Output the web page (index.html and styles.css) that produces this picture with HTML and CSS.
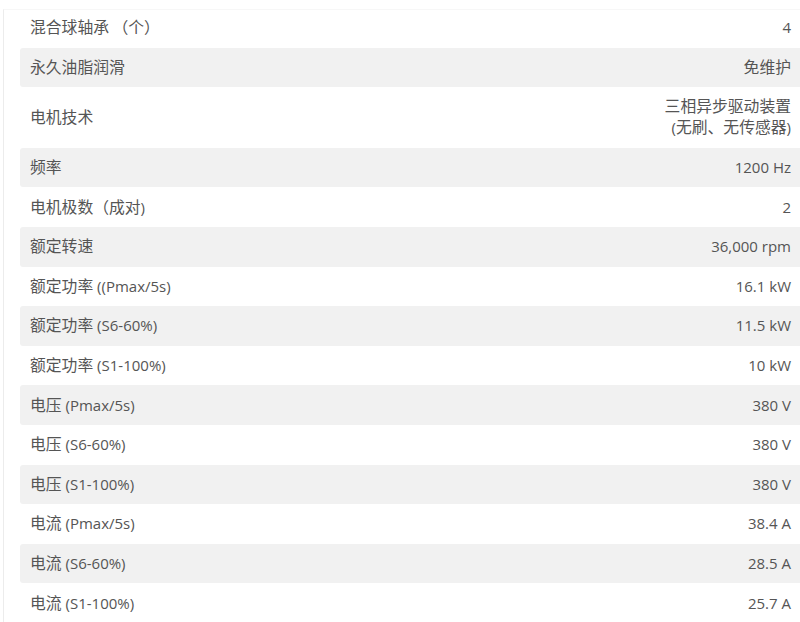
FILE: index.html
```html
<!DOCTYPE html>
<html lang="zh-CN">
<head>
<meta charset="utf-8">
<link rel="stylesheet" href="styles.css">
</head>
<body>
<div class="frame">
  <div class="specs">
    <div class="row"><span class="k"><span class="cn">混合球轴承 （个）</span></span><span class="v">4</span></div>
    <div class="row alt"><span class="k"><span class="cn">永久油脂润滑</span></span><span class="v"><span class="cn">免维护</span></span></div>
    <div class="row"><span class="k"><span class="cn">电机技术</span></span><span class="v"><span class="cn">三相异步驱动装置</span><br>(<span class="cn">无刷、无传感器</span>)</span></div>
    <div class="row alt"><span class="k"><span class="cn">频率</span></span><span class="v">1200 Hz</span></div>
    <div class="row"><span class="k"><span class="cn">电机极数（成对</span>)</span><span class="v">2</span></div>
    <div class="row alt"><span class="k"><span class="cn">额定转速</span></span><span class="v">36,000 rpm</span></div>
    <div class="row"><span class="k"><span class="cn">额定功率</span> ((Pmax/5s)</span><span class="v">16.1 kW</span></div>
    <div class="row alt"><span class="k"><span class="cn">额定功率</span> (S6-60%)</span><span class="v">11.5 kW</span></div>
    <div class="row"><span class="k"><span class="cn">额定功率</span> (S1-100%)</span><span class="v">10 kW</span></div>
    <div class="row alt"><span class="k"><span class="cn">电压</span> (Pmax/5s)</span><span class="v">380 V</span></div>
    <div class="row"><span class="k"><span class="cn">电压</span> (S6-60%)</span><span class="v">380 V</span></div>
    <div class="row alt"><span class="k"><span class="cn">电压</span> (S1-100%)</span><span class="v">380 V</span></div>
    <div class="row"><span class="k"><span class="cn">电流</span> (Pmax/5s)</span><span class="v">38.4 A</span></div>
    <div class="row alt"><span class="k"><span class="cn">电流</span> (S6-60%)</span><span class="v">28.5 A</span></div>
    <div class="row"><span class="k"><span class="cn">电流</span> (S1-100%)</span><span class="v">25.7 A</span></div>
  </div>
</div>
</body>
</html>
```
FILE: styles.css
```css
html, body {
  margin: 0;
  padding: 0;
  background: #ffffff;
}
body {
  font-family: "Open Sans", "Noto Sans CJK SC", sans-serif;
  font-size: 15px;
  color: #555555;
  overflow: hidden;
}
.frame {
  margin-left: 3px;
  border-left: 1px solid #ececec;
  border-top: 1px solid #f7f7f7;
  margin-top: 9px;
  padding-left: 16px;
  height: 640px;
}
.specs {
  margin-top: -2px;
}
.row {
  display: flex;
  justify-content: space-between;
  align-items: center;
  padding: 9.3px 9px 9.3px 10px;
  line-height: 21px;
  border-radius: 3px 0 0 3px;
}
.row.alt {
  background: #f1f1f1;
}
.v {
  text-align: right;
}
.cn {
  font-family: "Noto Sans CJK SC", sans-serif;
  font-size: 15.8px;
  line-height: 14px;
}
```
